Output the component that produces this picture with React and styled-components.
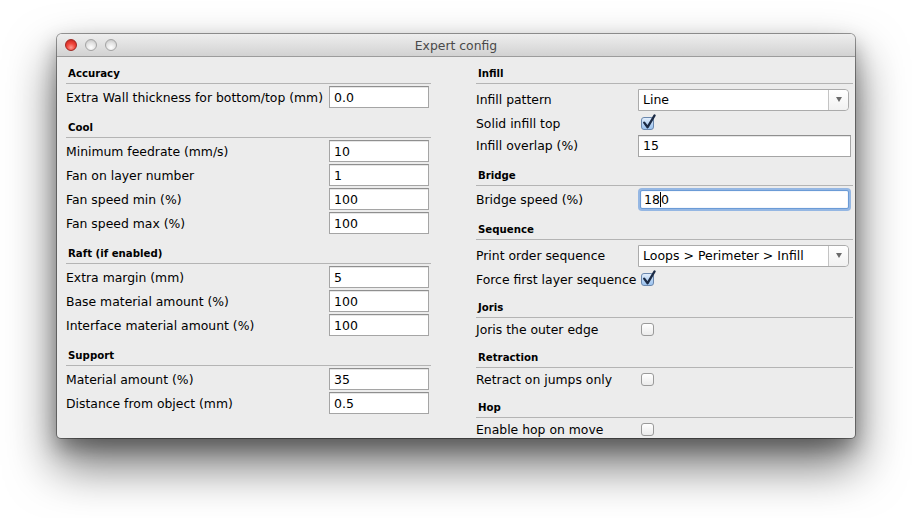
import React from "react";
import styled, { createGlobalStyle } from "styled-components";

const Global = createGlobalStyle`
  html, body { margin: 0; padding: 0; background: #ffffff; }
  body { font-family: "DejaVu Sans", "Liberation Sans", sans-serif; }
`;

const Page = styled.div`
  width: 912px;
  height: 518px;
  box-sizing: border-box;
  padding: 34px 0 0 57px;
  overflow: hidden;
`;

const Window = styled.div`
  width: 798px;
  height: 404px;
  box-sizing: border-box;
  display: flex;
  flex-direction: column;
  border-radius: 5px 5px 4px 4px;
  background: #ececec;
  box-shadow: 0 0 0 1px rgba(0, 0, 0, 0.38), 0 26px 48px 2px rgba(0, 0, 0, 0.55),
    0 10px 20px rgba(0, 0, 0, 0.3);
  overflow: hidden;
`;

const TitleBar = styled.div`
  height: 22px;
  flex: none;
  position: relative;
  display: flex;
  align-items: center;
  justify-content: center;
  background: linear-gradient(#eeeeee, #d2d2d2);
  border-bottom: 1px solid #9c9c9c;
  font-size: 12.4px;
  color: #4a4a4a;
`;

const Lights = styled.div`
  position: absolute;
  left: 8px;
  top: 5px;
  display: flex;
  gap: 8px;
`;

const Light = styled.span`
  width: 12px;
  height: 12px;
  border-radius: 50%;
  box-sizing: border-box;
  border: 1px solid ${(p) => (p.$red ? "#9e2620" : "#a3a3a3")};
  background: ${(p) =>
    p.$red
      ? "radial-gradient(circle at 50% 75%, #ff9a8f 0%, #f0463c 45%, #c01c14 100%)"
      : "radial-gradient(circle at 50% 75%, #ffffff 0%, #e4e4e4 50%, #bdbdbd 100%)"};
`;

const Body = styled.div`
  flex: 1;
  display: grid;
  grid-template-columns: 365px 377px;
  column-gap: 45px;
  padding: 7px 2px 0 9px;
  align-items: start;
`;

const Column = styled.div`
  display: flex;
  flex-direction: column;
`;

const Section = styled.div`
  display: flex;
  flex-direction: column;
  margin-top: ${(p) => p.$mt || 0}px;
`;

const Header = styled.div`
  height: 20px;
  box-sizing: border-box;
  border-bottom: 1px solid #b4b4b4;
  padding: 0 0 1px 2px;
  display: flex;
  align-items: center;
  font-size: 10.2px;
  font-weight: bold;
  color: #000;
`;

const Rows = styled.div`
  display: flex;
  flex-direction: column;
  padding-top: ${(p) => p.$pt || 0}px;
`;

const Row = styled.div`
  display: grid;
  grid-template-columns: ${(p) => p.$label}px auto;
  align-items: center;
  height: ${(p) => p.$h}px;
`;

const Label = styled.span`
  font-size: 12.4px;
  color: #000;
  white-space: nowrap;
`;

const TextBox = styled.div`
  width: ${(p) => p.$w}px;
  height: 22px;
  box-sizing: border-box;
  background: #fff;
  border: 1px solid #a5a5a5;
  border-top-color: #8f8f8f;
  box-shadow: inset 0 1px 0 #e6e6e6;
  padding-left: 4px;
  display: flex;
  align-items: center;
  font-size: 12.5px;
  color: #000;
`;

const FocusBox = styled(TextBox)`
  border: 1px solid #6b9bd6;
  border-radius: 2px;
  box-shadow: 0 0 0 2px rgba(120, 166, 224, 0.75), inset 0 0 1px rgba(80, 130, 200, 0.6);
  width: ${(p) => p.$w - 4}px;
  margin-left: 2px;
  height: 19px;
  padding-left: 3px;
`;

const Caret = styled.span`
  display: inline-block;
  width: 1px;
  height: 15px;
  background: #000;
`;

const Select = styled.div`
  width: 211px;
  height: 22px;
  box-sizing: border-box;
  display: flex;
  background: #fff;
  border: 1px solid #ababab;
  border-radius: 0 4px 4px 0;
  font-size: 12.5px;
  color: #000;
`;

const SelectText = styled.div`
  flex: 1;
  display: flex;
  align-items: center;
  padding-left: 4px;
  border-right: 1px solid #c4c4c4;
`;

const SelectArrow = styled.div`
  width: 19px;
  display: flex;
  align-items: center;
  justify-content: center;
  background: linear-gradient(#ffffff, #f1f1f1);
  border-radius: 0 4px 4px 0;
  &::after {
    content: "";
    border-left: 3.5px solid transparent;
    border-right: 3.5px solid transparent;
    border-top: 5px solid #6a6a6a;
  }
`;

const CheckBox = styled.span`
  position: relative;
  margin-left: 3px;
  width: 13px;
  height: 13px;
  box-sizing: border-box;
  border: 1px solid ${(p) => (p.$checked ? "#6a87ad" : "#9a9a9a")};
  border-radius: 3px;
  background: ${(p) =>
    p.$checked
      ? "linear-gradient(#e2eefc, #b3d1f3 60%, #9cc3ef)"
      : "linear-gradient(#ffffff, #ebebeb)"};
  svg {
    position: absolute;
    left: 0px;
    top: -4px;
    overflow: visible;
  }
`;

const Check = ({ checked }) => (
  <CheckBox $checked={checked}>
    {checked && (
      <svg width="14" height="16" viewBox="0 0 14 16">
        <path
          d="M2.2 8.6 L5.6 13.2 L12.6 1.4"
          fill="none"
          stroke="#1c2b45"
          strokeWidth="2.3"
          strokeLinecap="round"
          strokeLinejoin="round"
        />
      </svg>
    )}
  </CheckBox>
);

const L = 263;
const R = 162;

export default function App() {
  return (
    <>
      <Global />
      <Page>
        <Window>
          <TitleBar>
            <Lights>
              <Light $red />
              <Light />
              <Light />
            </Lights>
            Expert config
          </TitleBar>
          <Body>
            <Column>
              <Section>
                <Header>Accuracy</Header>
                <Rows $pt={1}>
                  <Row $label={L} $h={24}>
                    <Label>Extra Wall thickness for bottom/top (mm)</Label>
                    <TextBox $w={100}>0.0</TextBox>
                  </Row>
                </Rows>
              </Section>
              <Section $mt={9}>
                <Header>Cool</Header>
                <Rows $pt={1}>
                  <Row $label={L} $h={24}>
                    <Label>Minimum feedrate (mm/s)</Label>
                    <TextBox $w={100}>10</TextBox>
                  </Row>
                  <Row $label={L} $h={24}>
                    <Label>Fan on layer number</Label>
                    <TextBox $w={100}>1</TextBox>
                  </Row>
                  <Row $label={L} $h={24}>
                    <Label>Fan speed min (%)</Label>
                    <TextBox $w={100}>100</TextBox>
                  </Row>
                  <Row $label={L} $h={24}>
                    <Label>Fan speed max (%)</Label>
                    <TextBox $w={100}>100</TextBox>
                  </Row>
                </Rows>
              </Section>
              <Section $mt={9}>
                <Header>Raft (if enabled)</Header>
                <Rows $pt={1}>
                  <Row $label={L} $h={24}>
                    <Label>Extra margin (mm)</Label>
                    <TextBox $w={100}>5</TextBox>
                  </Row>
                  <Row $label={L} $h={24}>
                    <Label>Base material amount (%)</Label>
                    <TextBox $w={100}>100</TextBox>
                  </Row>
                  <Row $label={L} $h={24}>
                    <Label>Interface material amount (%)</Label>
                    <TextBox $w={100}>100</TextBox>
                  </Row>
                </Rows>
              </Section>
              <Section $mt={9}>
                <Header>Support</Header>
                <Rows $pt={1}>
                  <Row $label={L} $h={24}>
                    <Label>Material amount (%)</Label>
                    <TextBox $w={100}>35</TextBox>
                  </Row>
                  <Row $label={L} $h={24}>
                    <Label>Distance from object (mm)</Label>
                    <TextBox $w={100}>0.5</TextBox>
                  </Row>
                </Rows>
              </Section>
            </Column>

            <Column>
              <Section>
                <Header>Infill</Header>
                <Rows>
                  <Row $label={R} $h={31}>
                    <Label>Infill pattern</Label>
                    <Select>
                      <SelectText>Line</SelectText>
                      <SelectArrow />
                    </Select>
                  </Row>
                  <Row $label={R} $h={16}>
                    <Label>Solid infill top</Label>
                    <Check checked />
                  </Row>
                  <Row $label={R} $h={29}>
                    <Label>Infill overlap (%)</Label>
                    <TextBox $w={213}>15</TextBox>
                  </Row>
                </Rows>
              </Section>
              <Section $mt={6}>
                <Header>Bridge</Header>
                <Rows>
                  <Row $label={R} $h={26}>
                    <Label>Bridge speed (%)</Label>
                    <FocusBox $w={213}>
                      18
                      <Caret />0
                    </FocusBox>
                  </Row>
                </Rows>
              </Section>
              <Section $mt={8}>
                <Header>Sequence</Header>
                <Rows>
                  <Row $label={R} $h={31}>
                    <Label>Print order sequence</Label>
                    <Select>
                      <SelectText>Loops &gt; Perimeter &gt; Infill</SelectText>
                      <SelectArrow />
                    </Select>
                  </Row>
                  <Row $label={R} $h={16}>
                    <Label>Force first layer sequence</Label>
                    <Check checked />
                  </Row>
                </Rows>
              </Section>
              <Section $mt={11}>
                <Header>Joris</Header>
                <Rows>
                  <Row $label={R} $h={22}>
                    <Label>Joris the outer edge</Label>
                    <Check />
                  </Row>
                </Rows>
              </Section>
              <Section $mt={8}>
                <Header>Retraction</Header>
                <Rows>
                  <Row $label={R} $h={22}>
                    <Label>Retract on jumps only</Label>
                    <Check />
                  </Row>
                </Rows>
              </Section>
              <Section $mt={8}>
                <Header>Hop</Header>
                <Rows>
                  <Row $label={R} $h={22}>
                    <Label>Enable hop on move</Label>
                    <Check />
                  </Row>
                </Rows>
              </Section>
            </Column>
          </Body>
        </Window>
      </Page>
    </>
  );
}
